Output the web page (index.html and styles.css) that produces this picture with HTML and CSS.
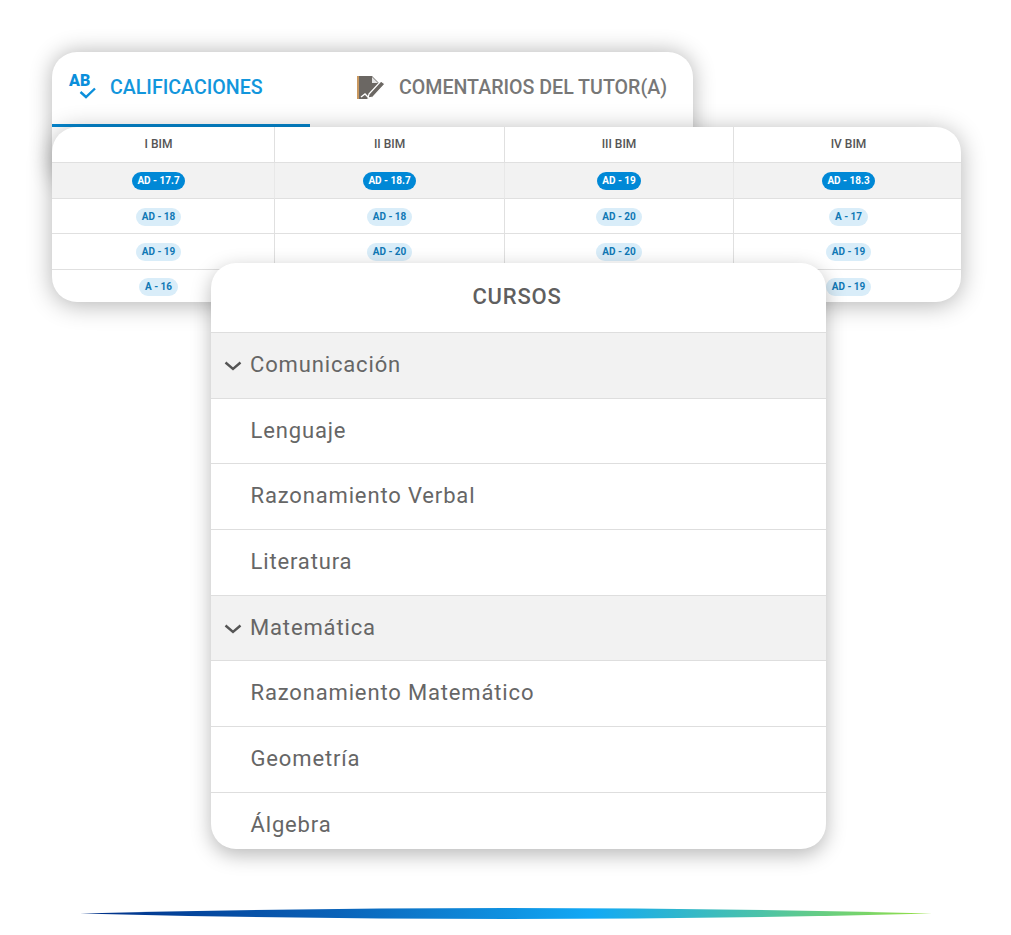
FILE: index.html
```html
<!DOCTYPE html>
<html>
  <head>
    <title>Calificaciones</title>
    <link rel="stylesheet" href="styles.css">
  </head>

  <body>
    <div class="stage">
      <!-- tabs -->
      <div class="tabs-card">
        <div class="tab active">
          <span class="ab-icon">
            <span class="ab-text">AB</span>
            <svg class="ab-check" width="18" height="12" viewBox="0 0 18 12">
              <path d="M1.5 5 L7 10 L16 1.5" fill="none" stroke="#0b8fdb" stroke-width="2.4"/>
            </svg>
          </span>
          <span>CALIFICACIONES</span>
        </div>
        <div class="tab">
          <svg class="note-icon" width="30" height="26" viewBox="0 0 30 26">
            <path d="M1 1 H15 L22 8 V11 L13 20 L11 24 H1 Z" fill="#6b6763"/>
            <path d="M15 2 L21 8 H15 Z" fill="#e4e4e4"/>
            <path d="M1 1 V24" stroke="#c9985f" stroke-width="2"/>
            <path d="M4 22 L8 19 L11 22" fill="none" stroke="#fff" stroke-width="1.4"/>
            <path d="M12 19 L24 6 L28 9 L16 22 L11 23 Z" fill="#6b6763" stroke="#fff" stroke-width="1.2"/>
          </svg>
          <span>COMENTARIOS DEL TUTOR(A)</span>
        </div>
      </div>

      <!-- grades -->
      <div class="grades-card">
        <div class="cell head">I BIM</div>
        <div class="cell head">II BIM</div>
        <div class="cell head">III BIM</div>
        <div class="cell head">IV BIM</div>

        <div class="cell shaded"><span class="pill strong">AD - 17.7</span></div>
        <div class="cell shaded"><span class="pill strong">AD - 18.7</span></div>
        <div class="cell shaded"><span class="pill strong">AD - 19</span></div>
        <div class="cell shaded"><span class="pill strong">AD - 18.3</span></div>

        <div class="cell"><span class="pill">AD - 18</span></div>
        <div class="cell"><span class="pill">AD - 18</span></div>
        <div class="cell"><span class="pill">AD - 20</span></div>
        <div class="cell"><span class="pill">A - 17</span></div>

        <div class="cell"><span class="pill">AD - 19</span></div>
        <div class="cell"><span class="pill">AD - 20</span></div>
        <div class="cell"><span class="pill">AD - 20</span></div>
        <div class="cell"><span class="pill">AD - 19</span></div>

        <div class="cell last"><span class="pill">A - 16</span></div>
        <div class="cell last"><span class="pill">AD - 19</span></div>
        <div class="cell last"><span class="pill">AD - 19</span></div>
        <div class="cell last"><span class="pill">AD - 19</span></div>
      </div>

      <!-- courses -->
      <div class="courses-card">
        <div class="courses-title">CURSOS</div>
        <div class="course group">
          <svg class="chevron" width="18" height="10" viewBox="0 0 18 10">
            <path d="M1.5 1.5 L9 8 L16.5 1.5" fill="none" stroke="#555" stroke-width="2.4"/>
          </svg>
          Comunicación
        </div>
        <div class="course">Lenguaje</div>
        <div class="course">Razonamiento Verbal</div>
        <div class="course">Literatura</div>
        <div class="course group">
          <svg class="chevron" width="18" height="10" viewBox="0 0 18 10">
            <path d="M1.5 1.5 L9 8 L16.5 1.5" fill="none" stroke="#555" stroke-width="2.4"/>
          </svg>
          Matemática
        </div>
        <div class="course">Razonamiento Matemático</div>
        <div class="course">Geometría</div>
        <div class="course">Álgebra</div>
      </div>

      <!-- gradient sliver -->
      <svg class="sliver" width="852" height="11" viewBox="0 0 852 11">
        <defs>
          <linearGradient id="sliver-fill">
            <stop offset="0" stop-color="#002f87"/>
            <stop offset="0.3" stop-color="#0a62b8"/>
            <stop offset="0.6" stop-color="#12a9f5"/>
            <stop offset="0.8" stop-color="#4cc3a8"/>
            <stop offset="1" stop-color="#96e040"/>
          </linearGradient>
        </defs>
        <path d="M0 5.5 Q426 -5.5 852 5.5 Q426 16.5 0 5.5 Z" fill="url(#sliver-fill)"/>
      </svg>
    </div>
  </body>
</html>
```

FILE: styles.css
```css
body {
  margin: 0;
  background: #fff;
  font-family: Roboto, "Liberation Sans", sans-serif;
  color: #666;
}
.stage {
  display: flex;
  flex-direction: column;
  align-items: flex-start;
  padding: 52px 0 0 52px;
  height: 883px;
  overflow: hidden;
}

/* tabs */
.tabs-card {
  display: flex;
  align-items: flex-start;
  width: 641px;
  height: 135px;
  margin-bottom: -60px;
  background: #fff;
  border-radius: 25px;
  box-shadow: 0 0 22px rgba(0, 0, 0, 0.3);
  overflow: hidden;
}
.tab {
  display: flex;
  align-items: center;
  height: 75px;
  box-sizing: border-box;
  font-size: 19.6px;
  font-weight: 500;
  color: #777;
  padding: 0 0 4px 47px;
  white-space: nowrap;
}
.tab.active {
  width: 258px;
  padding-left: 17px;
  color: #1296dc;
  border-bottom: 3px solid #0585cd;
  padding-bottom: 1px;
}
.ab-icon {
  display: flex;
  flex-direction: column;
  width: 41px;
  height: 26px;
  margin-bottom: 2px;
}
.ab-text {
  font-size: 16px;
  font-weight: 900;
  line-height: 13px;
  color: #0b8fdb;
}
.ab-check {
  margin-left: 10px;
}
.note-icon {
  margin-right: 12px;
}

/* grades table */
.grades-card {
  display: grid;
  grid-template-columns: 223px 230px 229px 227px;
  grid-template-rows: 36px 36px 35px 36px 32px;
  width: 909px;
  background: #fff;
  border-radius: 25px;
  box-shadow: 0 3px 24px rgba(0, 0, 0, 0.3);
  overflow: hidden;
  position: relative;
}
.cell {
  display: flex;
  align-items: center;
  justify-content: center;
  box-sizing: border-box;
  padding-top: 1px;
  border-bottom: 1px solid #e0e0e0;
  border-right: 1px solid #e0e0e0;
}
.cell:nth-child(4n + 1) {
  padding-right: 9px;
}
.cell:nth-child(4n) {
  border-right: none;
  padding-left: 2px;
}
.cell.head {
  font-size: 12px;
  font-weight: 500;
  color: #555;
  padding-top: 0;
  padding-bottom: 2px;
}
.cell.shaded {
  background: #f2f2f2;
  border-right-color: #e8e8e8;
  padding-top: 0;
}
.cell.last {
  border-bottom: none;
}
.pill {
  font-size: 10px;
  font-weight: 700;
  line-height: 18px;
  padding: 0 6px;
  border-radius: 9px;
  background: #d9edf9;
  color: #1078b5;
  white-space: nowrap;
}
.pill.strong {
  background: #0088d6;
  color: #fff;
  padding: 0 5px;
}

/* courses list */
.courses-card {
  width: 615px;
  height: 586px;
  margin: -39px 0 0 159px;
  background: #fff;
  border-radius: 25px;
  box-shadow: 0 6px 20px rgba(0, 0, 0, 0.28);
  overflow: hidden;
  position: relative;
}
.courses-title {
  height: 70px;
  line-height: 68px;
  padding-right: 3px;
  text-align: center;
  font-size: 22px;
  letter-spacing: 0.8px;
  font-weight: 500;
  color: #5f5f5f;
  border-bottom: 1px solid #dedede;
  box-sizing: border-box;
}
.course {
  display: flex;
  align-items: center;
  height: 65.7px;
  box-sizing: border-box;
  padding: 0 0 2px 39.5px;
  font-size: 22px;
  letter-spacing: 0.85px;
  color: #666;
  border-bottom: 1.5px solid #dedede;
}
.course.group {
  background: #f2f2f2;
  padding-left: 13px;
}
.chevron {
  margin: 3px 8px 0 0;
}

/* bottom */
.sliver {
  margin: 59px 0 0 28px;
}
```
